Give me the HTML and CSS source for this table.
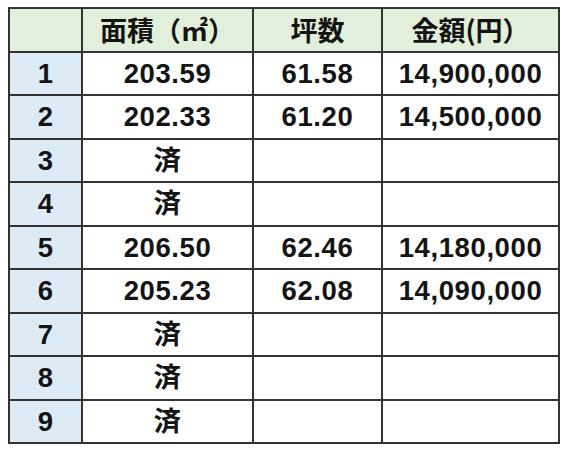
FILE: index.html
```html
<!DOCTYPE html>
<html lang="ja">
<head>
<meta charset="utf-8">
<link rel="stylesheet" href="styles.css">
</head>
<body>
<table class="sheet">
  <colgroup>
    <col class="c-no"><col class="c-area"><col class="c-tsubo"><col class="c-price">
  </colgroup>
  <thead>
    <tr class="head">
      <th></th><th>面積（㎡）</th><th>坪数</th><th>金額(円）</th>
    </tr>
  </thead>
  <tbody>
    <tr><th>1</th><td>203.59</td><td>61.58</td><td>14,900,000</td></tr>
    <tr><th>2</th><td>202.33</td><td>61.20</td><td>14,500,000</td></tr>
    <tr><th>3</th><td>済</td><td></td><td></td></tr>
    <tr><th>4</th><td>済</td><td></td><td></td></tr>
    <tr><th>5</th><td>206.50</td><td>62.46</td><td>14,180,000</td></tr>
    <tr><th>6</th><td>205.23</td><td>62.08</td><td>14,090,000</td></tr>
    <tr><th>7</th><td>済</td><td></td><td></td></tr>
    <tr><th>8</th><td>済</td><td></td><td></td></tr>
    <tr><th>9</th><td>済</td><td></td><td></td></tr>
  </tbody>
</table>
</body>
</html>
```
FILE: styles.css
```css
html, body {
  margin: 0;
  background: #ffffff;
}
body {
  padding: 7px 0 0 8px;
  font-family: "Liberation Sans", "Noto Sans CJK JP", sans-serif;
  font-weight: bold;
  color: #141414;
}
.sheet {
  border-collapse: collapse;
  table-layout: fixed;
  width: 550px;
  border: 2px solid #333;
}
.c-no { width: 73px; }
.c-area { width: 171px; }
.c-tsubo { width: 129px; }
.c-price { width: 177px; }
.sheet tr { height: 43.5px; }
.sheet th, .sheet td {
  border: 2px solid #333;
  padding: 0;
  text-align: center;
  vertical-align: middle;
  font-size: 27.5px;
  line-height: 1;
  font-weight: bold;
}
.head th {
  background: #e2efda;
  font-family: "Noto Sans CJK JP", sans-serif;
  font-size: 27px;
}
tbody th {
  background: #ddebf7;
  font-size: 28px;
}
tbody td {
  background: #ffffff;
  letter-spacing: 0.6px;
}
```
